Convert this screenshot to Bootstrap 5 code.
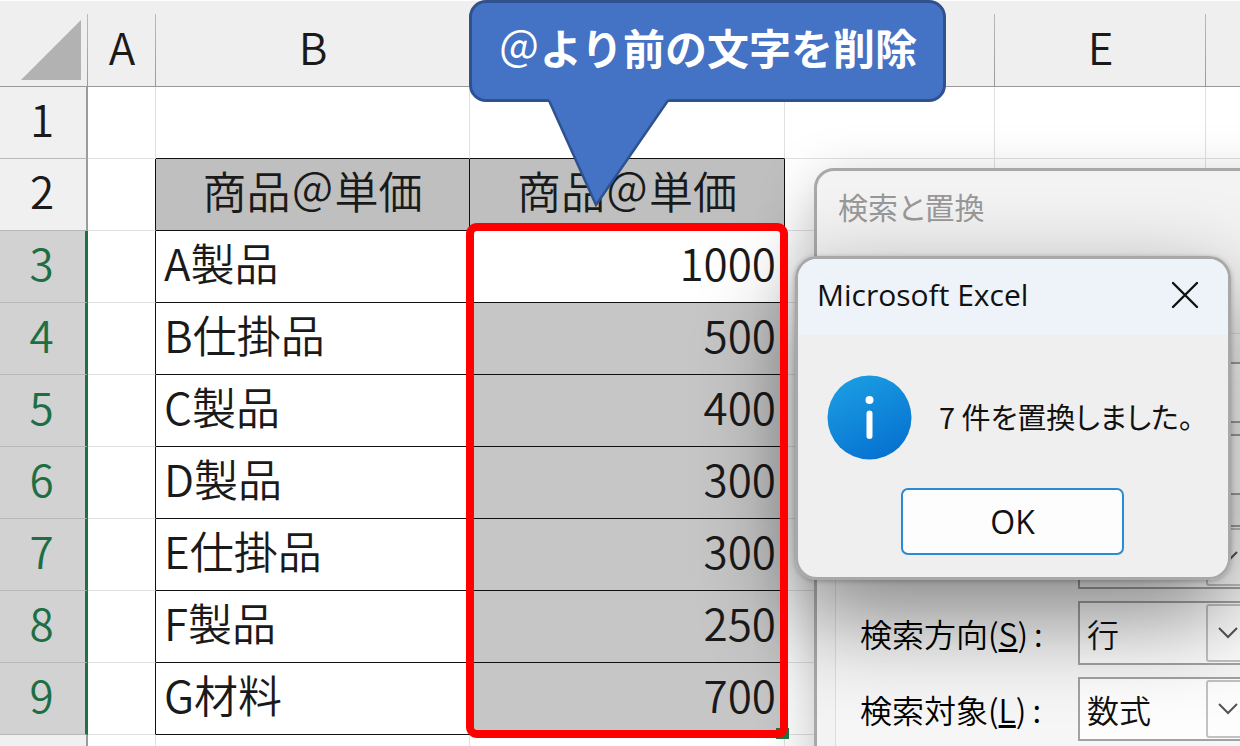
<!DOCTYPE html>
<html lang="ja">
<head>
<meta charset="utf-8">
<meta name="viewport" content="width=device-width, initial-scale=1">
<title>Microsoft Excel</title>
<link href="https://cdn.jsdelivr.net/npm/bootstrap@5.3.0/dist/css/bootstrap.min.css" rel="stylesheet">
<style>
  body { font-family: "Noto Sans CJK JP", sans-serif; color: #111; }
  .sheet-area { height: 100vh; }

  /* Worksheet */
  .sheet { table-layout: fixed; border-collapse: separate; border-spacing: 0; font-size: 44px; line-height: 60px; font-weight: 350; color: #1a1a1a; }
  .sheet th { font-weight: 350; text-align: center; }
  .sheet th, .sheet td { white-space: nowrap; border: 0 solid #e1e1e1; border-width: 0 1px 1px 0; padding: 0 8px 9px; height: 72px; }
  .sheet thead th { height: 87px; padding: 5px 0 0; background: linear-gradient(#bbb, #999) right bottom / 1px 72px no-repeat #efefef; border-width: 1px 0 1px 0; border-color: #fff transparent #999 transparent; }
  .sheet thead th:last-child { background: #efefef; }
  .sheet td:last-child { border-right: 0; }
  .sheet tbody th { background: #f0f0f0; border-right: 2px solid #9b9b9b; border-bottom-color: #b8b8b8; padding: 0 2px 9px 0; }
  .sheet tbody tr.picked th { background: #d2d2d2; color: #1e6e45; border-right: 3px solid #1b7343; }
  .sheet .boxed { border-color: #111; }
  .sheet .edge-b { border-bottom-color: #111; }
  .sheet .edge-r { border-right-color: #111; }
  .sheet .field { background: #bfbfbf; text-align: center; }
  .sheet .num { text-align: right; background: #c6c6c6; }
  .sheet .num.active { background: #fff; }
  .corner { width: 60px; height: 60px; right: 7px; bottom: 6px; }
  .c-head { width: 88px; } .c-a { width: 68px; } .c-b { width: 314px; } .c-c { width: 315px; } .c-d { width: 210px; } .c-e { width: 211px; }
  .fill-handle { left: 776px; top: 728px; width: 13px; height: 11px; background: #1b7343; }

  /* Annotations */
  .frame { left: 466px; top: 223px; width: 322px; height: 515px; border: 8px solid #f00; border-radius: 11px; pointer-events: none; }
  .callout { left: 469px; top: 0; width: 477px; height: 102px; border: 3px solid #2f528f; border-radius: 17px; background: #4472c4; color: #fff; font-size: 42px; font-weight: 700; line-height: 60px; padding-bottom: 8px; }
  .callout .at { font-weight: 400; }
  .callout svg { left: 74px; top: 94px; }

  /* Dialog windows */
  .win { background: #f3f3f3; border: 3px solid #a8a8a8; }
  .ui-text { font-size: 32px; line-height: 40px; font-weight: 350; font-feature-settings: "palt"; }
  .find { left: 814px; top: 168px; width: 520px; height: 640px; border-radius: 20px; box-shadow: 0 16px 56px rgba(0,0,0,.25); }
  .find-title { font-size: 30px; font-weight: 400; color: #999; padding: 15px 21px 0; height: 162px; }
  .pane { margin-left: 18px; border: 1px solid #ddd; padding: 28px 0 0 24px; background: #f6f6f6; }
  .slot { margin-left: 218px; width: 180px; height: 61px; border: 2px solid #a1a1a8; background: #fff; border-radius: 0; margin-bottom: 11px; padding: 0; display: block; }
  .picks { padding-top: 19px; }
  .pick-row { height: 64px; margin-bottom: 12px; }
  .pick-row label { width: 218px; color: #000; }
  .pick-row b { font-weight: inherit; margin-left: 6px; }
  .pick { width: 180px; height: 64px; }
  .pick select { appearance: none; border: 2px solid #a1a1a8; background: #fdfdfd; border-radius: 0; padding: 0 0 0 7px; color: #111; }
  .pick span { right: 8px; top: 3px; width: 44px; height: 58px; border: 2px solid #c2c2c2; border-radius: 3px; background: #fdfdfd; pointer-events: none; }
  .message { left: 795px; top: 256px; width: 436px; height: 324px; border-radius: 22px; background: #efefef; overflow: hidden; }
  .message-shadow { left: 795px; top: 256px; width: 436px; height: 324px; border-radius: 22px; box-shadow: 0 36px 96px rgba(0,0,0,.48), 0 1px 5px rgba(0,0,0,.25); }
  .message-title { height: 76px; background: #edf3f8; padding: 0 27px 4px 19px; font-family: "Open Sans", sans-serif; font-size: 30px; line-height: 40px; }
  .message-body { padding: 40px 0 28px 29px; gap: 27px; }
  .message-body .ui-text { font-size: 29px; font-weight: 400; padding-bottom: 4px; }
  .ok { width: 223px; height: 67px; margin-left: 103px; border: 2px solid #2a8ad4; border-radius: 7px; background: #fdfdfd; color: #111; font-family: "Open Sans", sans-serif; font-size: 32px; line-height: 40px; }
</style>
</head>
<body>
<main class="sheet-area position-relative overflow-hidden">
  <table class="sheet w-100">
    <colgroup><col class="c-head"><col class="c-a"><col class="c-b"><col class="c-c"><col class="c-d"><col class="c-e"><col></colgroup>
    <thead>
      <tr>
        <th class="position-relative"><svg class="corner position-absolute" viewBox="0 0 60 60" aria-hidden="true"><path d="M60 0V60H0Z" fill="#b2b2b2"/></svg></th>
        <th>A</th><th>B</th><th></th><th></th><th>E</th><th></th>
      </tr>
    </thead>
    <tbody>
      <tr><th>1</th><td></td><td class="edge-b"></td><td class="edge-b"></td><td></td><td></td><td></td></tr>
      <tr><th>2</th><td class="edge-r"></td><td class="boxed field">商品&#xFF20;単価</td><td class="boxed field">商品&#xFF20;単価</td><td></td><td></td><td></td></tr>
      <tr class="picked"><th>3</th><td class="edge-r"></td><td class="boxed">A製品</td><td class="boxed num active">1000</td><td></td><td></td><td></td></tr>
      <tr class="picked"><th>4</th><td class="edge-r"></td><td class="boxed">B仕掛品</td><td class="boxed num">500</td><td></td><td></td><td></td></tr>
      <tr class="picked"><th>5</th><td class="edge-r"></td><td class="boxed">C製品</td><td class="boxed num">400</td><td></td><td></td><td></td></tr>
      <tr class="picked"><th>6</th><td class="edge-r"></td><td class="boxed">D製品</td><td class="boxed num">300</td><td></td><td></td><td></td></tr>
      <tr class="picked"><th>7</th><td class="edge-r"></td><td class="boxed">E仕掛品</td><td class="boxed num">300</td><td></td><td></td><td></td></tr>
      <tr class="picked"><th>8</th><td class="edge-r"></td><td class="boxed">F製品</td><td class="boxed num">250</td><td></td><td></td><td></td></tr>
      <tr class="picked"><th>9</th><td class="edge-r"></td><td class="boxed">G材料</td><td class="boxed num">700</td><td></td><td></td><td></td></tr>
      <tr><th></th><td></td><td></td><td></td><td></td><td></td><td></td></tr>
    </tbody>
  </table>

  <section class="find win position-absolute" aria-label="検索と置換">
    <div class="find-title ui-text">検索と置換</div>
    <div class="pane">
      <input class="slot" type="text" aria-label="検索する文字列">
      <input class="slot" type="text" aria-label="置換後の文字列">
      <div class="picks">
        <div class="pick-row d-flex align-items-center">
          <label for="place"></label>
          <div class="pick position-relative"><select id="place" class="ui-text w-100 h-100" aria-label="検索場所"><option></option></select><span class="position-absolute d-flex align-items-center justify-content-center"><svg width="20" height="12" viewBox="0 0 20 12" fill="none" stroke="#555" stroke-width="2"><path d="M1 1L10 10L19 1"/></svg></span></div>
        </div>
        <div class="pick-row d-flex align-items-center">
          <label class="ui-text" for="dir">検索方向(<u>S</u>)<b>:</b></label>
          <div class="pick position-relative"><select id="dir" class="ui-text w-100 h-100"><option>行</option><option>列</option></select><span class="position-absolute d-flex align-items-center justify-content-center"><svg width="20" height="12" viewBox="0 0 20 12" fill="none" stroke="#555" stroke-width="2"><path d="M1 1L10 10L19 1"/></svg></span></div>
        </div>
        <div class="pick-row d-flex align-items-center">
          <label class="ui-text" for="look">検索対象(<u>L</u>)<b>:</b></label>
          <div class="pick position-relative"><select id="look" class="ui-text w-100 h-100"><option>数式</option></select><span class="position-absolute d-flex align-items-center justify-content-center"><svg width="20" height="12" viewBox="0 0 20 12" fill="none" stroke="#555" stroke-width="2"><path d="M1 1L10 10L19 1"/></svg></span></div>
        </div>
      </div>
    </div>
  </section>

  <div class="message-shadow position-absolute"></div>
  <section class="message win position-absolute" role="dialog" aria-label="Microsoft Excel">
    <div class="message-title d-flex align-items-center justify-content-between">
      <span>Microsoft Excel</span>
      <button type="button" class="btn p-0 border-0 d-flex" aria-label="閉じる"><svg width="32" height="32" viewBox="0 0 32 32" fill="none" stroke="#111" stroke-width="2.4" stroke-linecap="round"><path d="M4 4L28 28M28 4L4 28"/></svg></button>
    </div>
    <div class="message-body d-flex align-items-center">
      <svg width="85" height="85" viewBox="0 0 85 85" aria-hidden="true">
        <defs><linearGradient id="disc" x1=".25" y1="0" x2=".75" y2="1"><stop offset="0" stop-color="#1b9de2"/><stop offset="1" stop-color="#0570d0"/></linearGradient></defs>
        <circle cx="42.500" cy="42.500" r="42" fill="url(#disc)"/>
        <circle cx="42.500" cy="25" r="4" fill="#fff"/>
        <path d="M42.500 38.500V61" stroke="#fff" stroke-width="6" stroke-linecap="round"/>
      </svg>
      <span class="ui-text">7 件を置換しました。</span>
    </div>
    <button type="button" class="ok btn p-0">OK</button>
  </section>

  <div class="fill-handle position-absolute"></div>
  <div class="frame position-absolute"></div>
  <div class="callout position-absolute d-flex align-items-center justify-content-center">
    <span><span class="at">&#xFF20;</span>より前の文字を削除</span>
    <svg class="position-absolute" width="130" height="116" viewBox="0 0 130 116" aria-hidden="true"><path d="M2 0L3 3L50 108L122 3L124 0Z" fill="#4472c4"/><path d="M3 3.500L50 108L122 3.500" fill="none" stroke="#2f528f" stroke-width="2.500"/></svg>
  </div>
</main>
<script src="https://cdn.jsdelivr.net/npm/bootstrap@5.3.0/dist/js/bootstrap.bundle.min.js"></script>
</body>
</html>
